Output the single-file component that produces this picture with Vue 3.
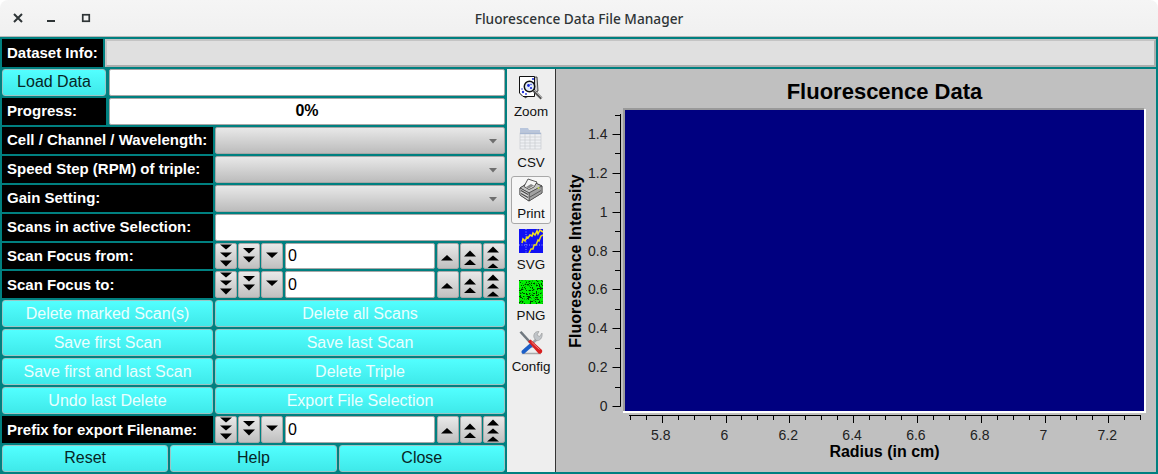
<script setup>
const rows = [
  { type: 'combo', label: 'Cell / Channel / Wavelength:' },
  { type: 'combo', label: 'Speed Step (RPM) of triple:' },
  { type: 'combo', label: 'Gain Setting:' },
  { type: 'field', label: 'Scans in active Selection:' },
  { type: 'counter', label: 'Scan Focus from:' },
  { type: 'counter', label: 'Scan Focus to:' },
  { type: 'buttons', a: 'Delete marked Scan(s)', b: 'Delete all Scans' },
  { type: 'buttons', a: 'Save first Scan', b: 'Save last Scan' },
  { type: 'buttons', a: 'Save first and last Scan', b: 'Delete Triple' },
  { type: 'buttons', a: 'Undo last Delete', b: 'Export File Selection' },
  { type: 'counter', label: 'Prefix for export Filename:' }
]

const tris = {
  3: [[1.5, 6.5], [9.5, 14.5], [17.5, 23.5]],
  2: [[5, 10.5], [13.5, 19.5]],
  1: [[9.5, 15]]
}
const triPoints = (t, dir) =>
  dir === 'down'
    ? `5,${t[0]} 17,${t[0]} 11,${t[1]}`
    : `4,${27 - t[0]} 16,${27 - t[0]} 10,${27 - t[1]}`

const yLabels = ['1.4', '1.2', '1', '0.8', '0.6', '0.4', '0.2', '0']
const yMajor = yLabels.map((l, i) => ({ l, y: 134 + i * 38.86 }))
const yMinor = [114.6, 153.4, 192.3, 231.2, 270, 308.9, 347.7, 386.6]
const xLabels = ['5.8', '6', '6.2', '6.4', '6.6', '6.8', '7', '7.2']
const xMajor = xLabels.map((l, i) => ({ l, x: 661.7 + i * 63.8 }))
const xMinor = []
for (let i = 0; i <= 32; i++) {
  if ((i - 2) % 4 !== 0) xMinor.push(629.8 + i * 15.95)
}

let seed = 7
const rnd = () => {
  seed = (seed * 16807) % 2147483647
  return seed / 2147483647
}
const noise = []
for (let y = 0; y < 24; y++) {
  for (let x = 0; x < 24; x++) {
    const r = rnd()
    if (r < 0.2) noise.push({ x, y, c: '#004000' })
    else if (r < 0.34) noise.push({ x, y, c: '#00b000' })
  }
}
const tools = ['Zoom', 'CSV', 'Print', 'SVG', 'PNG', 'Config']
</script>

<template>
  <div class="window">
    <header class="titlebar">
      <div class="wm">
        <svg width="12" height="12" viewBox="0 0 12 12"><path d="M2 2 L10 10 M10 2 L2 10" stroke="#2e3436" stroke-width="2" /></svg>
        <svg width="12" height="12" viewBox="0 0 12 12"><rect x="1" y="8" width="8" height="2" fill="#2e3436" /></svg>
        <svg width="12" height="12" viewBox="0 0 12 12"><rect x="2.75" y="2.75" width="6.5" height="6.5" fill="none" stroke="#2e3436" stroke-width="1.7" /></svg>
      </div>
      <span class="title">Fluorescence Data File Manager</span>
    </header>

    <div class="client">
      <div class="info-row">
        <div class="label info-label">Dataset Info:</div>
        <div class="info-field"></div>
      </div>

      <div class="main">
        <section class="controls">
          <div class="row row-top">
            <button class="cyan dark">Load Data</button>
            <div class="field"></div>
          </div>
          <div class="row row-top">
            <div class="label">Progress:</div>
            <div class="field progress">0%</div>
          </div>

          <div v-for="r in rows" :key="r.label || r.a" class="row">
            <template v-if="r.type === 'buttons'">
              <button class="cyan col-a">{{ r.a }}</button>
              <button class="cyan col-b">{{ r.b }}</button>
            </template>
            <template v-else>
              <div class="label col-a">{{ r.label }}</div>
              <div v-if="r.type === 'combo'" class="combo col-b">
                <svg class="caret" width="8" height="5" viewBox="0 0 8 5"><path d="M0 0 H8 L4 4.5 Z" fill="#6e6e6e" /></svg>
              </div>
              <div v-else-if="r.type === 'field'" class="field col-b"></div>
              <div v-else class="counter col-b">
                <div v-for="n in [3, 2, 1]" :key="'d' + n" class="spin">
                  <svg width="22" height="27" viewBox="0 0 22 27"><polygon v-for="(t, i) in tris[n]" :key="i" :points="triPoints(t, 'down')" fill="#000" /></svg>
                </div>
                <div class="field value">0</div>
                <div v-for="n in [1, 2, 3]" :key="'u' + n" class="spin">
                  <svg width="22" height="27" viewBox="0 0 22 27"><polygon v-for="(t, i) in tris[n]" :key="i" :points="triPoints(t, 'up')" fill="#000" /></svg>
                </div>
              </div>
            </template>
          </div>

          <div class="row bottom">
            <button class="cyan dark">Reset</button>
            <button class="cyan dark">Help</button>
            <button class="cyan dark">Close</button>
          </div>
        </section>

        <aside class="tools">
          <div v-for="t in tools" :key="t" class="tool" :class="{ active: t === 'Print' }">
            <svg v-if="t === 'Zoom'" width="24" height="24" viewBox="0 0 24 24">
              <path d="M4 2 L18 1 L19 15 L6 22 Z" fill="#d0d0d0" stroke="#222" stroke-width="0.8" />
              <path d="M0.5 0.5 H15.5 V20.5 H4 L0.5 17 Z" fill="#fff" stroke="#111" stroke-width="1" />
              <g fill="#2233dd"><circle cx="14" cy="3" r="1.1" /><circle cx="4" cy="16" r="1.2" /><circle cx="7" cy="18" r="0.9" /><circle cx="3" cy="13" r="0.8" /><circle cx="14.5" cy="7" r="0.8" /></g>
              <circle cx="10.5" cy="10.5" r="5.2" fill="#e2ecf8" stroke="#111" stroke-width="1.5" />
              <g fill="#1a28d8"><circle cx="9.5" cy="9.5" r="1.4" /><circle cx="12" cy="12" r="1.1" /><circle cx="12" cy="8.5" r="0.7" /></g>
              <path d="M14.5 14.5 L22.5 22.5" stroke="#555" stroke-width="2.6" />
              <path d="M15 14 L23 22" stroke="#c4c4c4" stroke-width="0.8" />
            </svg>
            <svg v-else-if="t === 'CSV'" width="24" height="24" viewBox="0 0 24 24">
              <path d="M1 1 H9 L10 3 H21 V7 H1 Z" fill="#b9c6dc" />
              <rect x="1" y="6" width="21" height="16" fill="#eef0f3" stroke="#c8ccd2" stroke-width="0.7" />
              <path d="M1 6.5 H22" stroke="#a8b8d2" stroke-width="1.4" />
              <path d="M1 10 H22 M1 13 H22 M1 16 H22 M1 19 H22 M6 7 V22 M11 7 V22 M16 7 V22" stroke="#c9ccd0" stroke-width="0.7" fill="none" />
            </svg>
            <svg v-else-if="t === 'Print'" width="24" height="24" viewBox="0 0 24 24">
              <path d="M1 10 L12 3 L23 8 V15 L10 23 L1 17 Z" fill="#8a8a8a" stroke="#333" stroke-width="0.7" />
              <path d="M1 10 L12 3 L23 8 L10 15 Z" fill="#c4c4c4" stroke="#333" stroke-width="0.7" />
              <path d="M5 8.5 L9 1 L18 4 L15 9 L10 11.5 Z" fill="#f6f6f6" stroke="#333" stroke-width="0.8" />
              <path d="M7 9 L12 6 L15 7.5 L10 10.5 Z" fill="#8a8a8a" />
              <path d="M10 15 V23 L23 15 V8 Z" fill="#a2a2a2" stroke="#333" stroke-width="0.5" />
              <path d="M1 10 L10 15 V23 L1 17 Z" fill="#dadada" stroke="#333" stroke-width="0.7" />
              <path d="M2 12.5 L9 16.5 M2 15.5 L9 19.5" stroke="#444" stroke-width="1.1" />
              <circle cx="19.5" cy="10" r="1" fill="#c4d84a" />
              <path d="M11 19 L22 12.5" stroke="#5c5c5c" stroke-width="1" />
            </svg>
            <svg v-else-if="t === 'SVG'" width="24" height="24" viewBox="0 0 24 24">
              <rect width="24" height="24" fill="#1010f4" />
              <path d="M7 0 V24 M0 16 H24" stroke="#d0d0ff" stroke-width="0.7" stroke-dasharray="1 1.5" />
              <path d="M3 14 L4 10 L6 12 L8 8 L9 9 L11 6 L13 7 L14 4 L16 6 L18 2 L19 5 L21 1 L24 3" stroke="#f0e020" stroke-width="1.6" fill="none" />
              <path d="M10 24 L12 20 L14 20 L15 16 L17 16 L19 11 L20 12 L22 7 L24 6" stroke="#e8d820" stroke-width="1.5" fill="none" />
            </svg>
            <svg v-else-if="t === 'PNG'" width="24" height="24" viewBox="0 0 24 24" shape-rendering="crispEdges">
              <rect width="24" height="24" fill="#00f000" />
              <rect v-for="(p, i) in noise" :key="i" :x="p.x" :y="p.y" width="1" height="1" :fill="p.c" />
            </svg>
            <svg v-else width="24" height="24" viewBox="0 0 24 24">
              <path d="M4 22.5 L10 16 H18 L21 22.5 Z" fill="none" stroke="#a8a8a8" stroke-width="1.4" />
              <path d="M0.5 1.5 L2.5 0 L12 10.5 L10.5 12.5 Z" fill="#70787f" />
              <path d="M18 8 L6 19" stroke="#a0a6ac" stroke-width="2.6" />
              <path d="M23 2 L20.5 5.5 L18 4 L20 0.5 C16.5 0 14 3 15 6.5 L17 9.5 C20.5 10.5 24 7 23 2 Z" fill="#c0c4c8" stroke="#888" stroke-width="0.5" />
              <path d="M11.5 12 L3 19.5 C1.5 21.5 3.5 23.5 5.5 22.5 L14 15 Z" fill="#1c5fc8" />
              <path d="M9 10.5 L11.5 8.5 L23 19 C24 21.5 21.5 23.5 19.5 22.5 Z" fill="#d82020" />
              <path d="M12.5 11 L20.5 18.5" stroke="#f4a0a0" stroke-width="0.8" />
            </svg>
            <span>{{ t }}</span>
          </div>
        </aside>

        <section class="plot">
          <svg class="chart" width="600" height="403" viewBox="556 69 600 403">
            <text x="884.5" y="99" text-anchor="middle" class="p-title">Fluorescence Data</text>

            <path d="M624 411 V109 H1144" stroke="#9a9a9a" stroke-width="2" fill="none" />
            <path d="M623 412 H1145 V109" stroke="#fff" stroke-width="2" fill="none" />
            <rect x="625" y="110" width="519" height="301" fill="#000080" />

            <path d="M620.5 114 V406.5" stroke="#000" fill="none" />
            <path v-for="t in yMajor" :key="t.l" :d="`M612.5 ${Math.round(t.y) + 0.5} H620.5`" stroke="#000" />
            <path v-for="y in yMinor" :key="y" :d="`M615 ${Math.round(y) + 0.5} H620.5`" stroke="#000" />
            <text v-for="t in yMajor" :key="t.l" x="607.5" :y="t.y + 5" text-anchor="end" class="p-tick">{{ t.l }}</text>

            <path d="M629 415.5 H1141" stroke="#000" fill="none" />
            <path v-for="t in xMajor" :key="t.l" :d="`M${Math.round(t.x) + 0.5} 415.5 V423`" stroke="#000" />
            <path v-for="x in xMinor" :key="x" :d="`M${Math.round(x) + 0.5} 415.5 V420`" stroke="#000" />
            <text v-for="t in xMajor" :key="t.l" :x="t.x - 1" y="440" text-anchor="middle" class="p-tick">{{ t.l }}</text>

            <text x="884.5" y="457" text-anchor="middle" class="p-axis">Radius (in cm)</text>
            <text transform="translate(581 261) rotate(-90)" text-anchor="middle" class="p-axis">Fluorescence Intensity</text>
          </svg>
        </section>
      </div>
    </div>
  </div>
</template>

<style scoped>
.window {
  width: 1158px;
  height: 474px;
  display: flex;
  flex-direction: column;
  background: #fff;
  font-family: "Liberation Sans", Arial, sans-serif;
  overflow: hidden;
}
.titlebar {
  height: 36px;
  flex: none;
  position: relative;
  display: flex;
  align-items: center;
  justify-content: center;
  background: linear-gradient(#f5f5f5, #f0f0f0);
  border-radius: 8px 8px 0 0;
  box-sizing: content-box;
  border-bottom: 1px solid #b8b8b8;
}
.wm {
  position: absolute;
  left: 12px;
  top: 12px;
  display: flex;
  gap: 22px;
}
.title {
  font-family: "Noto Sans", sans-serif;
  font-size: 13.7px;
  font-weight: 500;
  color: #2e3436;
}
.client {
  flex: 1;
  min-height: 0;
  box-sizing: border-box;
  background: #008080;
  padding: 2px;
  display: flex;
  flex-direction: column;
  gap: 2px;
}
.info-row {
  height: 28px;
  flex: none;
  display: flex;
  gap: 2px;
}
.info-label {
  width: 101px;
}
.label {
  background: #000;
  color: #fff;
  font-size: 15px;
  font-weight: 700;
  display: flex;
  align-items: center;
  padding: 0 0 1px 5px;
  box-sizing: border-box;
  white-space: nowrap;
}
.info-field {
  flex: 1;
  box-sizing: border-box;
  background: #e0e0e0;
  border: 2px solid #c4c4c4;
  border-bottom-color: #aeaeae;
  border-right-color: #aeaeae;
}
.main {
  height: 403px;
  flex: none;
  display: flex;
}
.controls {
  width: 503px;
  flex: none;
  display: flex;
  flex-direction: column;
  gap: 2px;
}
.row {
  flex: 1;
  min-height: 0;
  display: flex;
  gap: 2px;
}
.row-top {
  gap: 3px;
}
.row-top > :first-child {
  width: 104px;
  flex: none;
}
.col-a {
  width: 211px;
  flex: none;
}
.col-b {
  flex: 1;
  min-width: 0;
}
.bottom > button {
  flex: 1;
  min-width: 0;
}
.cyan {
  margin: 0;
  padding: 0;
  background: linear-gradient(#52ffff, #3fe9e9);
  border: 1px solid #9cc4c4;
  border-radius: 3px;
  color: #eaffff;
  font-family: inherit;
  font-size: 16px;
  white-space: nowrap;
}
.cyan.dark {
  color: #062626;
}
.field {
  flex: 1;
  min-width: 0;
  box-sizing: border-box;
  background: #fff;
  border: 1px solid #a8a8a8;
  border-radius: 2px;
}
.progress {
  font-size: 16px;
  font-weight: 700;
  display: flex;
  align-items: center;
  justify-content: center;
  color: #000;
}
.combo {
  position: relative;
  box-sizing: border-box;
  background: linear-gradient(#e8e8e8, #bcbcbc);
  border: 1px solid #a6a6a6;
  border-radius: 2px;
}
.caret {
  position: absolute;
  right: 7px;
  top: 11px;
}
.counter {
  display: flex;
  gap: 1px;
}
.spin {
  width: 22px;
  flex: none;
  box-sizing: border-box;
  background: linear-gradient(#e9e9e9, #c0c0c0);
  border: 1px solid #a8a8a8;
  border-radius: 2px;
  position: relative;
  overflow: hidden;
}
.spin svg {
  position: absolute;
  left: -1px;
  top: -1px;
}
.value {
  font-size: 16px;
  display: flex;
  align-items: center;
  padding-left: 2px;
  color: #000;
  margin: 0 1px;
}
.tools {
  margin-left: 2px;
  width: 49px;
  flex: none;
  box-sizing: border-box;
  background: #eeeeee;
  border-right: 1px solid #333;
  padding: 5px 4px 0 4px;
  display: flex;
  flex-direction: column;
  gap: 3px;
}
.tool {
  height: 48px;
  flex: none;
  box-sizing: border-box;
  display: flex;
  flex-direction: column;
  align-items: center;
  padding-top: 1px;
  gap: 4px;
  font-size: 13.4px;
  color: #111;
  border: 1px solid transparent;
  border-radius: 3px;
}
.tool svg {
  flex: none;
}
.tool.active {
  background: #f6f6f6;
  border-color: #a8a8a8;
}
.plot {
  flex: 1;
  background: #c0c0c0;
  min-width: 0;
}
.chart {
  display: block;
}
.p-title {
  font-size: 22px;
  font-weight: 700;
  fill: #000;
}
.p-tick {
  font-size: 14px;
  fill: #222;
}
.p-axis {
  font-size: 16px;
  font-weight: 700;
  fill: #000;
}
</style>
